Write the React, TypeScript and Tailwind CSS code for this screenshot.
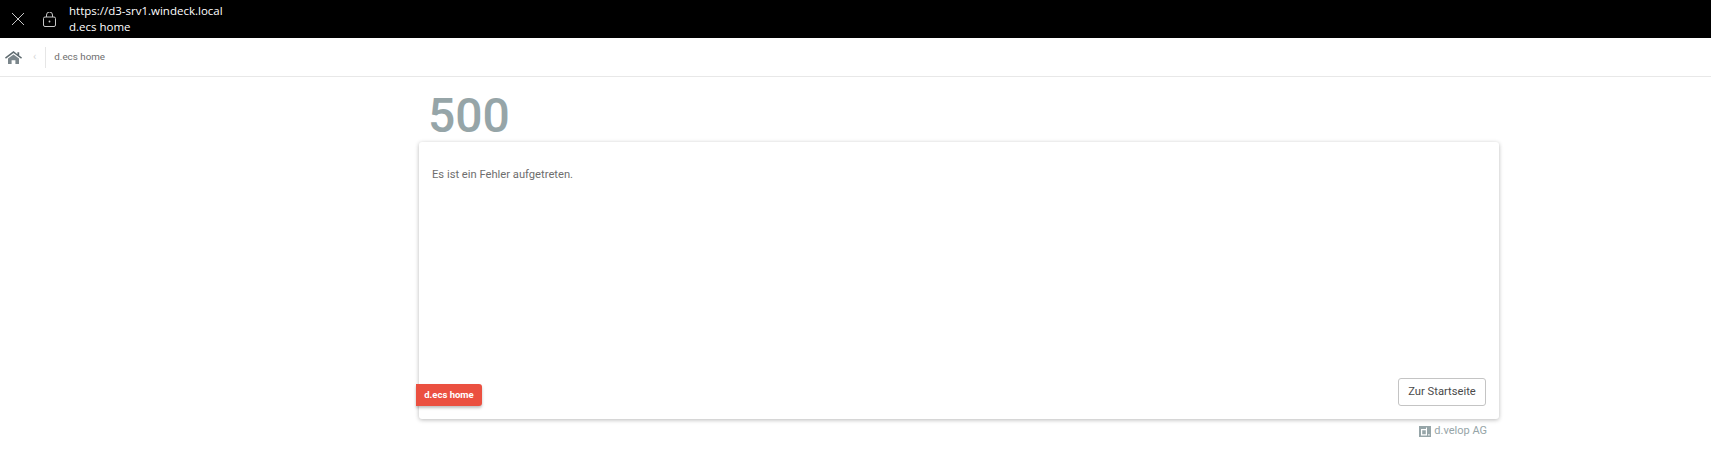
function HomeIcon() {
  return (
    <svg viewBox="0 0 17 13" className="h-[13px] w-[17px]">
      <path d="M8.5 0 0 6.6l.9 1.1L8.5 1.9l7.6 5.8.9-1.1-2.8-2.2V1.2h-1.8v2L8.5 0Z" fill="#5f6b70" />
      <path d="M3 7.6 8.5 3.4 14 7.6V13h-3.6V9.2H6.6V13H3V7.6Z" fill="#7b868b" />
    </svg>
  );
}

function CloseIcon() {
  return (
    <svg viewBox="0 0 12 12" className="ml-3 h-3 w-3 stroke-[#c8c8c8]" fill="none" strokeWidth={1}>
      <path d="M0 0 12 12M12 0 0 12" />
    </svg>
  );
}

function LockIcon() {
  return (
    <svg viewBox="0 0 13 15" className="ml-[19px] h-[15px] w-[13px] stroke-[#c8c8c8]" fill="none" strokeWidth={1}>
      <path d="M3.5 5V3a3 3 0 0 1 6 0V5" />
      <rect x="0.5" y="5" width="12" height="9.5" rx="1.5" />
      <circle cx="6.5" cy="9.5" r="0.9" fill="#c8c8c8" stroke="none" />
    </svg>
  );
}

function LogoMark() {
  return (
    <svg viewBox="0 0 12 11" className="h-[11px] w-3">
      <rect width="12" height="11" fill="#96a5a8" />
      <path d="M2 3h5V1.5h1V9.5H2V3Zm1.2 1.2v4.1h3.6V4.2H3.2Z" fill="#fff" />
      <rect x="9.2" y="8.2" width="1.4" height="1.3" fill="#fff" />
    </svg>
  );
}

export default function App() {
  return (
    <div className="h-[461px] overflow-hidden bg-white font-['Roboto',sans-serif]">
      <header className="flex h-[38px] items-center bg-black text-white">
        <CloseIcon />
        <LockIcon />
        <div className="ml-[13px] font-['Open_Sans',sans-serif] text-[11.5px] leading-[16px]">
          <div>https://d3-srv1.windeck.local</div>
          <div>d.ecs home</div>
        </div>
      </header>

      <nav className="flex h-[39px] items-center border-b border-[#e8e8e8]">
        <div className="ml-[5px] flex">
          <HomeIcon />
        </div>
        <span className="ml-[11px] text-[11px] text-[#d5d5d5]">‹</span>
        <div className="ml-[9px] h-[21px] w-px bg-[#e6e6e6]" />
        <span className="ml-2 text-[9.8px] text-[#6e6e6e]">d.ecs home</span>
      </nav>

      <main className="ml-[419px] w-[1080px]">
        <h1 className="ml-[9px] mt-[10px] h-[55px] text-[48px] font-medium leading-[57px] text-[#96a5a8]">
          500
        </h1>
        <section className="relative flex h-[277px] flex-col rounded-[3px] bg-white px-[13px] pb-[13px] pt-[26px] shadow-[0_1px_4px_rgba(0,0,0,0.28)]">
          <p className="flex-1 text-[11.2px] leading-[14px] text-[#6e6e6e]">Es ist ein Fehler aufgetreten.</p>
          <div className="flex justify-end">
            <button
              type="button"
              className="h-7 w-[88px] rounded-[3px] border border-[#c4c4c4] bg-white text-[11.2px] text-[#4a4a4a]"
            >
              Zur Startseite
            </button>
          </div>
          <span className="absolute bottom-[13px] left-[-3px] flex h-[22px] w-[66px] items-center justify-center rounded-r-[3px] bg-[#eb5040] text-[9.5px] font-bold text-white shadow-[0_2px_3px_rgba(0,0,0,0.25)]">
            d.ecs home
          </span>
        </section>
        <footer className="mr-[12px] mt-[4px] flex items-center justify-end gap-[3px] text-[11px] text-[#96a5a8]">
          <LogoMark />
          d.velop AG
        </footer>
      </main>
    </div>
  );
}
